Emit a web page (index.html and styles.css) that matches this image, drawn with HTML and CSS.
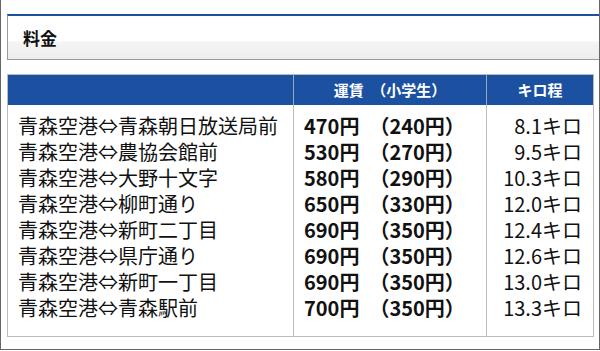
FILE: index.html
```html
<!DOCTYPE html>
<html lang="ja">
<head>
<meta charset="utf-8">
<title>料金</title>
<link rel="stylesheet" href="styles.css">
</head>
<body>
<div class="frame">
  <div class="heading"><h2>料金</h2></div>
  <table class="fare">
    <colgroup><col class="w1"><col class="w2"><col class="w3"></colgroup>
    <thead>
      <tr><th></th><th>運賃　（小学生）</th><th>キロ程</th></tr>
    </thead>
    <tbody>
      <tr>
        <td class="route">青森空港⇔青森朝日放送局前<br>青森空港⇔農協会館前<br>青森空港⇔大野十文字<br>青森空港⇔柳町通り<br>青森空港⇔新町二丁目<br>青森空港⇔県庁通り<br>青森空港⇔新町一丁目<br>青森空港⇔青森駅前</td>
        <td class="price">470円　（240円）<br>530円　（270円）<br>580円　（290円）<br>650円　（330円）<br>690円　（350円）<br>690円　（350円）<br>690円　（350円）<br>700円　（350円）</td>
        <td class="dist">8.1キロ<br>9.5キロ<br>10.3キロ<br>12.0キロ<br>12.4キロ<br>12.6キロ<br>13.0キロ<br>13.3キロ</td>
      </tr>
    </tbody>
  </table>
</div>
</body>
</html>
```
FILE: styles.css
```css
* { box-sizing: border-box; }
html, body { margin: 0; padding: 0; background: #fff; }
body {
  font-family: "Noto Sans CJK JP", "Noto Sans", sans-serif;
  color: #111;
}
.frame {
  width: 600px;
  height: 350px;
  border-left: 1px solid #666;
  border-right: 1px solid #666;
  border-bottom: 1px solid #666;
  padding: 14px 0 0 6px;
}
.heading {
  height: 46px;
  border-top: 2px solid #1c4f9c;
  border-left: 1px solid #999;
  border-bottom: 1px solid #999;
  background: linear-gradient(to bottom, #fff 0, #fff 58%, #f5f5f5 60%, #ececec 100%);
  display: flex;
  align-items: center;
  padding-left: 15px;
}
.heading h2 {
  margin: 0;
  font-size: 17px;
  font-weight: bold;
  line-height: 1;
  color: #111;
}
.fare {
  margin-top: 14px;
  width: 586px;
  border-collapse: collapse;
  table-layout: fixed;
  border: 1px solid #bbb;
}
.w1 { width: 286px; }
.w2 { width: 193px; }
.w3 { width: 107px; }
.fare th {
  background: #1b51a0;
  color: #fff;
  font-size: 15px;
  font-weight: bold;
  height: 30px;
  padding: 0;
  text-align: center;
  border-left: 1px solid #9aa6bd;
  line-height: 1;
}
.fare th:first-child { border-left: none; }
.fare td {
  vertical-align: top;
  font-size: 20px;
  line-height: 26px;
  padding: 8px 10px 15px 10px;
  border-left: 1px solid #bbb;
  white-space: nowrap;
}
.fare td:first-child { border-left: none; }
.route { padding-left: 11px; }
.price { font-weight: bold; }
.dist { text-align: right; }
.fare td.dist { padding-right: 11px; }
```
